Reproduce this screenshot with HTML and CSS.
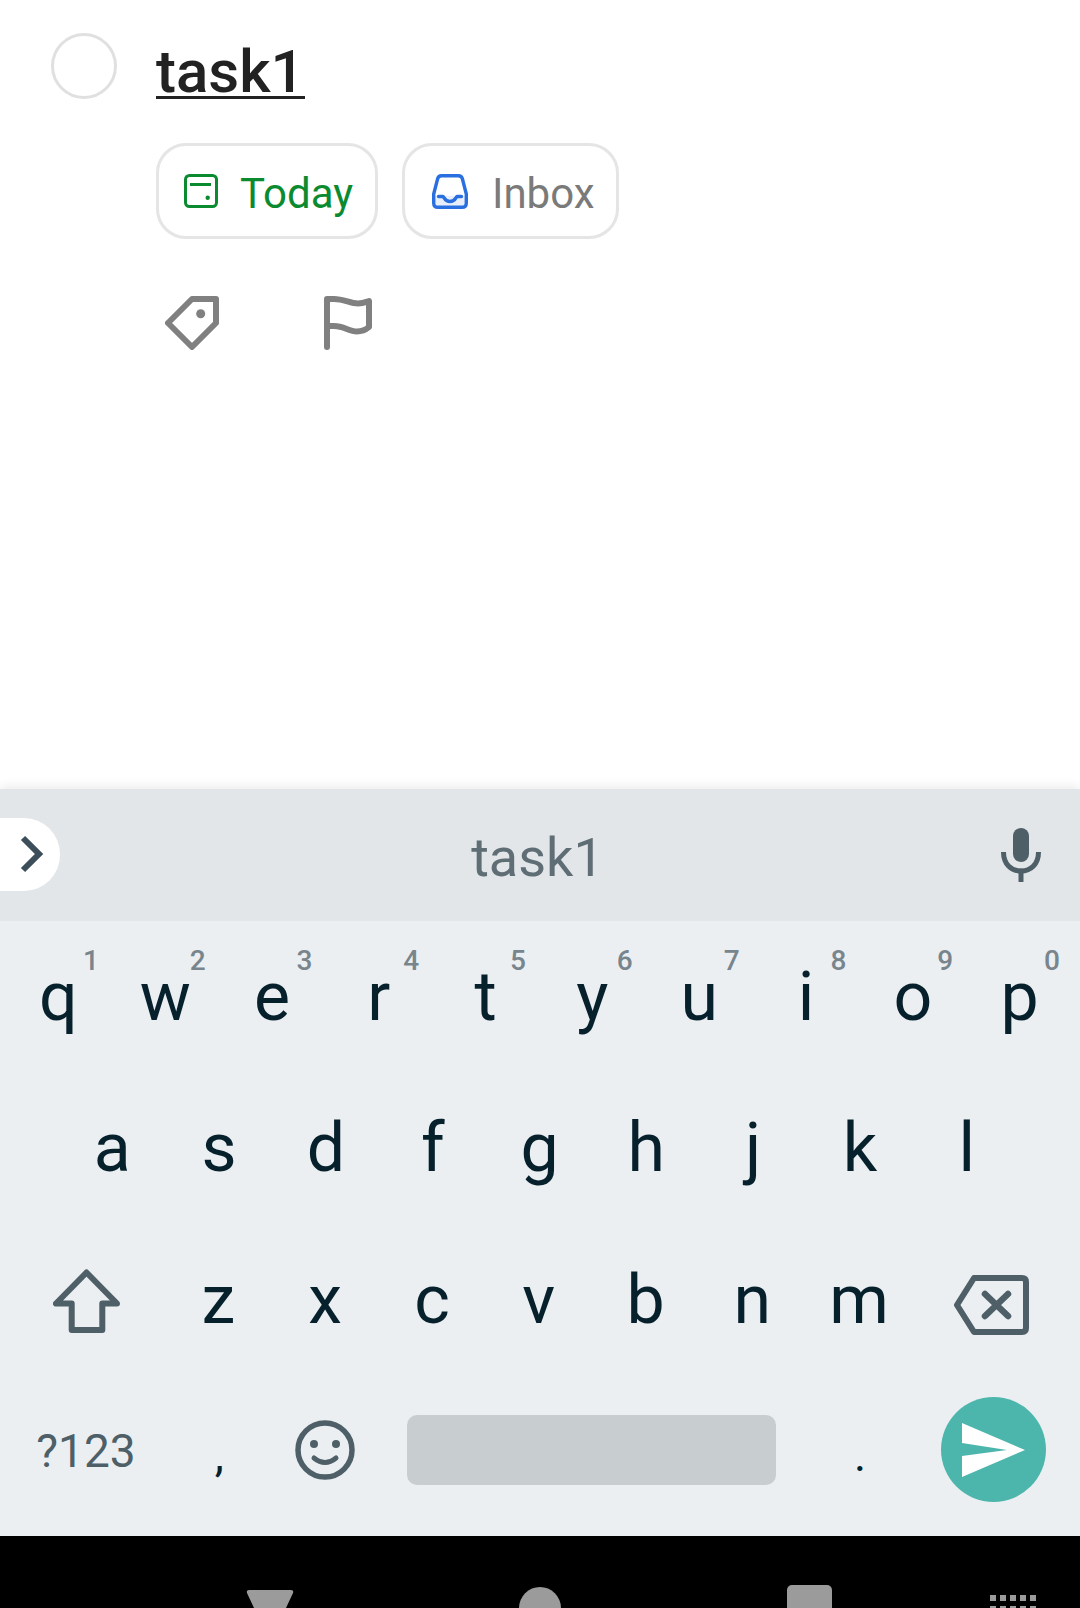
FILE: index.html
```html
<!DOCTYPE html>
<html lang="en">
<head>
    <meta charset="UTF-8">
    <meta name="viewport" content="width=device-width, initial-scale=1.0">
    <title>task1</title>
    <link rel="stylesheet" href="styles.css">
</head>
<body>
    <div class="task">
        <div class="check"></div>
        <div class="task-body">
            <div class="title">task1</div>
            <div class="chips">
                <div class="chip chip-today">
                    <svg class="chip-icon" width="34" height="34" viewBox="0 0 34 34" fill="none" stroke="#0b8a2f" stroke-width="3">
                        <rect x="1.5" y="1.5" width="31" height="31" rx="4"/>
                        <path d="M6 10.5H27"/>
                        <circle cx="23.7" cy="23.7" r="2.2" fill="#0b8a2f" stroke="none"/>
                    </svg>
                    <span class="chip-text">Today</span>
                </div>
                <div class="chip chip-inbox">
                    <svg class="chip-icon" width="36" height="35" viewBox="0 0 36 35" fill="none" stroke="#2a6fe0" stroke-width="3.4">
                        <path d="M3 22H33V29Q33 32 30 32H6Q3 32 3 29Z" fill="#e8effb" stroke="none"/>
                        <path d="M9.5 1.7H26.5Q29.5 1.7 30.3 4.5L34.3 20V29Q34.3 33.3 30 33.3H6Q1.7 33.3 1.7 29V20L5.7 4.5Q6.5 1.7 9.5 1.7Z"/>
                        <path d="M6.5 22.5H11C12 22.5 12.5 27.5 18 27.5C23.5 27.5 24 22.5 25 22.5H29.5" stroke-linecap="round"/>
                    </svg>
                    <span class="chip-text">Inbox</span>
                </div>
            </div>
            <div class="tools">
                <svg width="54" height="54" viewBox="0 0 54 54" fill="none" stroke="#808080" stroke-width="6" stroke-linejoin="round">
                    <path d="M51 3H27L3 27L27 51L51 27Z"/>
                    <circle cx="35.7" cy="17.7" r="4.5" fill="#808080" stroke="none"/>
                </svg>
                <svg width="48" height="54" viewBox="0 0 48 54" fill="none" stroke="#808080" stroke-width="6" stroke-linecap="round" stroke-linejoin="round">
                    <path d="M3 51V3H10C20 3 26 7.5 34 7.5C39 7.5 42 6 45 5V31C42 33.5 39 35.5 33 35.5C25 35.5 20 30 10 30H3"/>
                </svg>
            </div>
        </div>
    </div>

    <div class="keyboard">
        <div class="strip">
            <div class="pill">
                <svg width="24" height="38" viewBox="0 0 24 38" fill="none" stroke="#3c4e59" stroke-width="6">
                    <path d="M3 3L19 19L3 35"/>
                </svg>
            </div>
            <div class="strip-word">task1</div>
            <svg class="mic" width="40" height="54" viewBox="0 0 40 54" fill="none" stroke="#4e5f68" stroke-width="5">
                <rect x="12" y="0" width="16" height="34" rx="8" fill="#4e5f68" stroke="none"/>
                <path d="M2.5 24C2.5 36 10 43 20 43C30 43 37.5 36 37.5 24"/>
                <path d="M20 43V53" stroke-linecap="round"/>
            </svg>
        </div>
        <div class="keys">
            <div class="row">
                <div class="key">q<span class="num">1</span></div>
                <div class="key">w<span class="num">2</span></div>
                <div class="key">e<span class="num">3</span></div>
                <div class="key">r<span class="num">4</span></div>
                <div class="key">t<span class="num">5</span></div>
                <div class="key">y<span class="num">6</span></div>
                <div class="key">u<span class="num">7</span></div>
                <div class="key">i<span class="num">8</span></div>
                <div class="key">o<span class="num">9</span></div>
                <div class="key">p<span class="num">0</span></div>
            </div>
            <div class="row row-mid">
                <div class="key">a</div>
                <div class="key">s</div>
                <div class="key">d</div>
                <div class="key">f</div>
                <div class="key">g</div>
                <div class="key">h</div>
                <div class="key">j</div>
                <div class="key">k</div>
                <div class="key">l</div>
            </div>
            <div class="row">
                <div class="key key-side">
                    <svg class="icon-shift" width="67" height="64" viewBox="0 0 67 64" fill="none" stroke="#4e5f68" stroke-width="6" stroke-linejoin="round">
                        <path d="M33.5 3.5L3 34.5H18.7V61H49.3V34.5H64Z"/>
                    </svg>
                </div>
                <div class="key">z</div>
                <div class="key">x</div>
                <div class="key">c</div>
                <div class="key">v</div>
                <div class="key">b</div>
                <div class="key">n</div>
                <div class="key">m</div>
                <div class="key key-side">
                    <svg class="icon-del" width="75" height="60" viewBox="0 0 75 60" fill="none" stroke="#4e5f68" stroke-width="6" stroke-linejoin="round">
                        <path d="M20 3H68Q72 3 72 7V53Q72 57 68 57H20L3 30Z"/>
                        <path d="M31 19L54 41M54 19L31 41" stroke-width="6.5" stroke-linecap="round"/>
                    </svg>
                </div>
            </div>
            <div class="row row-bottom">
                <div class="key key-side key-sym">?123</div>
                <div class="key key-punct">,</div>
                <div class="key">
                    <svg width="60" height="60" viewBox="0 0 60 60" fill="none" stroke="#4e5f68" stroke-width="5.5">
                        <circle cx="30" cy="30" r="27"/>
                        <circle cx="19" cy="24" r="4" fill="#4e5f68" stroke="none"/>
                        <circle cx="41" cy="24" r="4" fill="#4e5f68" stroke="none"/>
                        <path d="M19 38Q30 47 41 38" stroke-width="5" stroke-linecap="round"/>
                    </svg>
                </div>
                <div class="key key-space"><div class="spacebar"></div></div>
                <div class="key key-punct">.</div>
                <div class="key key-side">
                    <div class="enter">
                        <svg width="63" height="54" viewBox="0 0 63 54" fill="#fff">
                            <path d="M0 0L63 27L0 54V33L45 27L0 20Z"/>
                        </svg>
                    </div>
                </div>
            </div>
        </div>
    </div>

    <div class="navbar">
        <svg class="nav-back" width="48" height="18" viewBox="0 0 48 18" fill="#9b9b9b">
            <path d="M3 0H45Q48 0 47 3L40 18H8L1 3Q0 0 3 0Z"/>
        </svg>
        <div class="nav-home"></div>
        <div class="nav-recent"></div>
        <svg class="nav-grid" width="46" height="13" viewBox="0 0 46 13" fill="#9b9b9b">
            <rect x="0" y="0" width="6" height="6"/><rect x="10" y="0" width="6" height="6"/><rect x="20" y="0" width="6" height="6"/><rect x="30" y="0" width="6" height="6"/><rect x="40" y="0" width="6" height="6"/>
            <rect x="0" y="11" width="6" height="6"/><rect x="10" y="11" width="6" height="6"/><rect x="20" y="11" width="6" height="6"/><rect x="30" y="11" width="6" height="6"/><rect x="40" y="11" width="6" height="6"/>
        </svg>
    </div>
</body>
</html>
```

FILE: styles.css
```css
body {
    font-family: 'Roboto', sans-serif;
    background-color: #fff;
    margin: 0;
    width: 1080px;
    height: 1608px;
    overflow: hidden;
}
.task {
    display: flex;
    gap: 39px;
    height: 789px;
    box-sizing: border-box;
    padding: 33px 0 0 51px;
}
.check {
    width: 66px;
    height: 66px;
    box-sizing: border-box;
    border: 3px solid #e0e0e0;
    border-radius: 50%;
}
.title {
    width: fit-content;
    margin-top: 16px;
    padding-bottom: 1px;
    font-size: 60px;
    font-weight: 500;
    line-height: 46px;
    color: #222;
    border-bottom: 3px solid #222;
}
.chips {
    display: flex;
    gap: 24px;
    margin-top: 44px;
}
.chip {
    display: flex;
    align-items: center;
    height: 96px;
    box-sizing: border-box;
    padding: 0 0 0 25px;
    border: 3px solid #e5e5e5;
    border-radius: 30px;
    font-size: 42px;
}
.chip-text {
    padding-top: 5px;
}
.chip-today {
    width: 222px;
    color: #0b8a2f;
}
.chip-inbox {
    width: 217px;
    padding-left: 27px;
    color: #7a7a7a;
}
.chip-icon {
    flex: none;
    margin-right: 22px;
}
.chip-inbox .chip-icon {
    margin-right: 24px;
}
.tools {
    display: flex;
    gap: 105px;
    margin: 57px 0 0 9px;
}

.keyboard {
    background-color: #ebeff2;
    height: 747px;
    box-shadow: 0 -3px 10px rgba(0,0,0,0.08);
    position: relative;
}
.strip {
    display: flex;
    align-items: center;
    justify-content: space-between;
    height: 132px;
    background-color: #e2e6e9;
    padding-right: 39px;
}
.pill {
    display: flex;
    align-items: center;
    width: 60px;
    height: 73px;
    box-sizing: border-box;
    margin-top: -2px;
    padding-left: 20px;
    background-color: #fff;
    border-radius: 0 36px 36px 0;
}
.strip-word {
    margin-left: 14px;
    padding-top: 4px;
    font-size: 54px;
    color: #5f6d75;
}
.keys {
    padding: 0 5px;
}
.row {
    display: flex;
    height: 151.5px;
}
.row-mid {
    justify-content: center;
    padding-right: 1px;
}
.row-bottom {
    height: 148px;
}
.key {
    flex: none;
    display: flex;
    align-items: center;
    justify-content: center;
    width: 106.8px;
    position: relative;
    font-size: 68px;
    line-height: 1;
    color: #06202c;
}
.key-side {
    width: 160px;
}
.key-sym {
    box-sizing: border-box;
    padding: 3px 0 0 2px;
    font-size: 46px;
    color: #4e5f68;
}
.key-punct {
    box-sizing: border-box;
    padding: 11px 0 0 2px;
    font-size: 46px;
}
.key-space {
    width: 427px;
    padding: 0 30px 0 28px;
    box-sizing: border-box;
}
.spacebar {
    width: 100%;
    height: 70px;
    background-color: #c8cdd0;
    border-radius: 10px;
}
.enter {
    display: flex;
    align-items: center;
    justify-content: center;
    width: 105px;
    height: 105px;
    margin-left: 2px;
    background-color: #4db6ac;
    border-radius: 50%;
}
.icon-shift {
    margin: 2px 0 0 2px;
}
.icon-del {
    margin: 10px 2px 0 0;
}
.num {
    position: absolute;
    top: 26px;
    right: 13px;
    font-size: 28px;
    font-weight: 500;
    color: #78858d;
}

.navbar {
    display: flex;
    align-items: flex-start;
    height: 72px;
    background-color: #000;
    overflow: hidden;
}
.nav-back {
    flex: none;
    margin: 54px 0 0 246px;
}
.nav-home {
    flex: none;
    width: 42px;
    height: 42px;
    margin: 51px 0 0 225px;
    background-color: #9b9b9b;
    border-radius: 50%;
}
.nav-recent {
    flex: none;
    width: 45px;
    height: 45px;
    margin: 49px 0 0 226px;
    background-color: #9b9b9b;
    border-radius: 5px;
}
.nav-grid {
    flex: none;
    margin: 59px 0 0 158px;
}
```
